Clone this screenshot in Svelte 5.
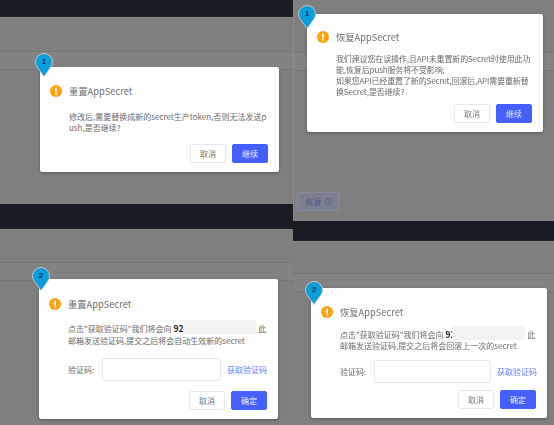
<script>
  const resetTop = '修改后,需要替换成新的secret生产token,否则无法发送push,是否继续?';
</script>

{#snippet head(title, n)}
  <div class="pin">
    <svg width="20" height="25" viewBox="0 0 20 25">
      <path d="M10 23.5 L3.5 14.5 A8.5 8.5 0 1 1 16.5 14.5 Z" fill="#0a9fdc" stroke="#c9c9c9" stroke-width="1" />
    </svg>
    <span>{n}</span>
  </div>
  <div class="head">
    <svg class="warn" width="12" height="12" viewBox="0 0 12 12">
      <circle cx="6" cy="6" r="6" fill="#ffa20d" />
      <rect x="5.1" y="2.4" width="1.8" height="4.8" rx="0.8" fill="#fff" />
      <circle cx="6" cy="8.8" r="1" fill="#fff" />
    </svg>
    <span class="title">{title}</span>
  </div>
{/snippet}

{#snippet actions(label)}
  <div class="actions">
    <button class="btn">取消</button>
    <button class="btn primary">{label}</button>
  </div>
{/snippet}

{#snippet code()}
  <div class="code">
    <span class="label">验证码:</span>
    <div class="input"></div>
    <a class="link" href="#top">获取验证码</a>
  </div>
{/snippet}

<main class="page">
  <div class="col left">
    <section class="panel a">
      <div class="bar"></div>
      <div class="band"></div>
      <div class="dialog d1">
        {@render head('重置AppSecret', 1)}
        <p class="text">{resetTop}</p>
        {@render actions('继续')}
      </div>
    </section>
    <section class="panel b">
      <div class="bar"></div>
      <div class="band"></div>
      <div class="dialog d3">
        {@render head('重置AppSecret', 2)}
        <p class="text">点击"获取验证码"我们将会向 <b>92</b><i class="mask"></i> 此<br />邮箱发送验证码,提交之后将会自动生效新的secret</p>
        {@render code()}
        {@render actions('确定')}
      </div>
    </section>
  </div>
  <div class="col right">
    <section class="panel c">
      <div class="band"></div>
      <button class="restore">恢复
        <svg width="7" height="7" viewBox="0 0 7 7">
          <circle cx="3.5" cy="3.5" r="3" fill="none" stroke="#4c5a90" stroke-width="0.7" />
          <rect x="3.1" y="3" width="0.8" height="2.2" fill="#4c5a90" />
          <rect x="3.1" y="1.8" width="0.8" height="0.7" fill="#4c5a90" />
        </svg>
      </button>
      <div class="dialog d2">
        {@render head('恢复AppSecret', 1)}
        <p class="text">我们建议您在误操作,且API未重置新的Secret时使用此功能,恢复后push服务将不受影响;<br />如果您API已经重置了新的Secret,回滚后,API需要重新替换Secret,是否继续?</p>
        {@render actions('继续')}
      </div>
    </section>
    <section class="panel e">
      <div class="bar"></div>
      <div class="band"></div>
      <div class="dialog d4">
        {@render head('恢复AppSecret', 2)}
        <p class="text">点击"获取验证码"我们将会向 <b class="cut">92</b><i class="mask"></i> 此<br />邮箱发送验证码,提交之后将会回滚上一次的secret</p>
        {@render code()}
        {@render actions('确定')}
      </div>
    </section>
  </div>
</main>

<style>
  :global(body) {
    margin: 0;
    background: #7e7e7e;
  }
  .page {
    display: grid;
    grid-template-columns: 293px 261px;
    width: 554px;
    height: 425px;
    overflow: hidden;
    font-family: "Noto Sans CJK SC", sans-serif;
    filter: blur(0.45px);
  }
  .col {
    display: flex;
    flex-direction: column;
  }
  .panel {
    position: relative;
    background: #7f7f7f;
  }
  .a { height: 204px; }
  .b { height: 221px; }
  .c { height: 221px; border-left: 1px solid #8c8c8c; box-sizing: border-box; }
  .e { height: 204px; }
  .bar {
    background: #1a1c23;
    border-bottom: 1px solid #8c8c8c;
  }
  .a .bar { height: 17px; }
  .b .bar { height: 25px; }
  .e .bar { height: 20px; }
  .band {
    height: 17px;
    background: #838383;
    border-top: 1px solid #767676;
    border-bottom: 1px solid #767676;
  }
  .a .band { margin-top: 33px; }
  .b .band { margin-top: 32px; }
  .c .band { margin-top: 52px; }
  .e .band { margin-top: 31px; }
  .restore {
    display: flex;
    align-items: center;
    justify-content: center;
    gap: 3px;
    width: 43px;
    height: 19px;
    margin: 121px 0 0 3px;
    padding: 0;
    font: inherit;
    font-size: 8px;
    color: #4c5a90;
    background: #7b7f90;
    border: 1px solid #868ba0;
    border-radius: 2px;
  }
  .dialog {
    position: absolute;
    box-sizing: border-box;
    background: #fff;
    border-radius: 2px;
    box-shadow: 0 1px 3px rgba(0, 0, 0, 0.35);
    color: #6a6a6a;
    font-size: 8px;
    line-height: 11px;
  }
  .d1 { left: 40px; top: 67px; width: 239px; height: 105px; padding: 18px 10px 0 10px; }
  .d2 { left: 13px; top: 14px; width: 236px; height: 118px; padding: 17px 10px 0 10px; }
  .d3 { left: 39px; top: 75px; width: 239px; height: 140px; padding: 19px 10px 0 10px; }
  .d4 { left: 18px; top: 67px; width: 236px; height: 130px; padding: 18px 10px 0 10px; }
  .pin {
    position: absolute;
    width: 20px;
    height: 25px;
    color: #10384c;
    font-size: 8px;
    font-weight: 700;
    font-family: "Liberation Sans", sans-serif;
    line-height: 18px;
    text-align: center;
  }
  .pin svg { position: absolute; left: 0; top: 0; }
  .pin span { position: relative; }
  .d1 .pin { left: -6px; top: -14px; }
  .d2 .pin { left: -10px; top: -9px; }
  .d3 .pin { left: -8px; top: -12px; }
  .d4 .pin { left: -7px; top: -7px; }
  .head {
    display: flex;
    align-items: center;
    gap: 7px;
    height: 12px;
  }
  .title {
    font-size: 9.3px;
    line-height: 12px;
    color: #707070;
  }
  .text {
    margin: 14px 0 0 19px;
    word-break: break-all;
  }
  .d2 .text { margin-top: 10px; letter-spacing: -0.13px; }
  .d3 .text { margin-top: 12px; line-height: 12px; }
  .d4 .text { margin-top: 11px; line-height: 10.5px; }
  b {
    color: #1c1c1c;
    font-weight: 700;
    font-size: 8.5px;
  }
  .cut { margin-right: -3px; }
  .mask {
    display: inline-block;
    width: 73px;
    height: 14px;
    margin: -4px 0 -2px;
    background: #f2f2f2;
  }
  .code {
    display: flex;
    align-items: center;
    margin: 11px 0 0 19px;
    height: 23px;
  }
  .d4 .code { margin-top: 9px; }
  .label { width: 34px; flex: none; }
  .input {
    box-sizing: border-box;
    width: 119px;
    height: 23px;
    border: 1px solid #e6e8f0;
    border-radius: 2px;
  }
  .link {
    margin-left: 6px;
    color: #6b7cff;
    text-decoration: none;
    white-space: nowrap;
  }
  .actions {
    display: flex;
    justify-content: flex-end;
    gap: 6px;
    position: absolute;
    right: 11px;
    bottom: 9px;
  }
  .btn {
    box-sizing: border-box;
    width: 36px;
    height: 19px;
    padding: 0;
    font: inherit;
    font-size: 8px;
    color: #777;
    background: #fff;
    border: 1px solid #e8e9ef;
    border-radius: 2px;
  }
  .primary {
    color: #e8ebff;
    background: #4560ff;
    border-color: #4560ff;
  }
</style>
